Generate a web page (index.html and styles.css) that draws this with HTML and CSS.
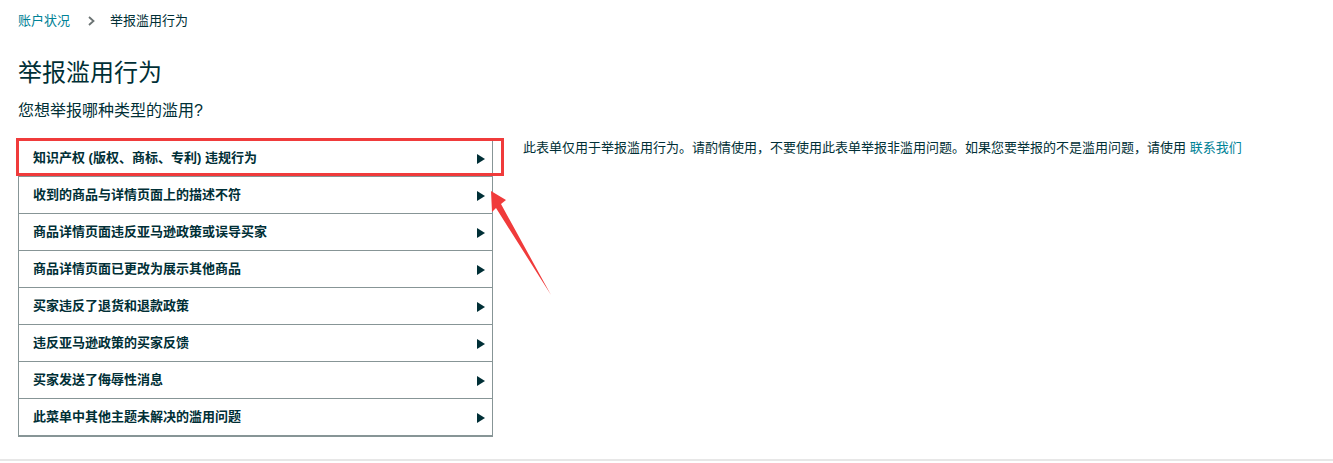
FILE: index.html
```html
<!DOCTYPE html>
<html lang="zh-CN">
<head>
  <meta charset="UTF-8" />
  <meta name="viewport" content="width=device-width, initial-scale=1.0" />
  <title>举报滥用行为</title>
  <link rel="stylesheet" href="styles.css">
</head>
<body>
  <div class="page">
    <div class="breadcrumb">
      <a href="#">账户状况</a>
      <svg class="crumb-sep" width="7" height="10" viewBox="0 0 7 10"><path d="M1 1 L5.5 5 L1 9" fill="none" stroke="#6b7373" stroke-width="1.8"/></svg>
      <span>举报滥用行为</span>
    </div>

    <h1>举报滥用行为</h1>
    <p class="question">您想举报哪种类型的滥用?</p>

    <div class="content">
      <ul class="abuse-list">
        <li class="selected">知识产权 (版权、商标、专利) 违规行为<span class="mark"></span></li>
        <li>收到的商品与详情页面上的描述不符</li>
        <li>商品详情页面违反亚马逊政策或误导买家</li>
        <li>商品详情页面已更改为展示其他商品</li>
        <li>买家违反了退货和退款政策</li>
        <li>违反亚马逊政策的买家反馈</li>
        <li>买家发送了侮辱性消息</li>
        <li>此菜单中其他主题未解决的滥用问题</li>
      </ul>

      <p class="note">此表单仅用于举报滥用行为。请酌情使用，不要使用此表单举报非滥用问题。如果您要举报的不是滥用问题，请使用 <a href="#">联系我们</a></p>
    </div>
  </div>

  <svg class="pointer" width="80" height="120" viewBox="0 0 80 120">
    <polygon points="6,6 21,15 16,19 66,110 11,23 7,27" fill="#f03b3b"/>
  </svg>

  <div class="footer-line"></div>
</body>
</html>
```

FILE: styles.css
```css
body {
  margin: 0;
  font-family: Arial, "Noto Sans CJK SC", sans-serif;
  color: #002f36;
  background-color: #fff;
  position: relative;
  height: 463px;
  overflow: hidden;
}

.page {
  padding: 12px 18px 0;
}

.breadcrumb {
  font-size: 13px;
  line-height: 18px;
  display: flex;
  align-items: center;
}

.breadcrumb a {
  color: #008296;
  text-decoration: none;
}

.crumb-sep {
  margin: 0 15px 0 18px;
}

h1 {
  font-size: 24px;
  font-weight: normal;
  line-height: 30px;
  margin: 28px 0 0;
}

.question {
  font-size: 16px;
  line-height: 20px;
  margin: 13px 0 0;
}

.content {
  display: flex;
  align-items: flex-start;
  margin-top: 18px;
}

.abuse-list {
  list-style: none;
  margin: 0;
  padding: 0;
  width: 473px;
  border: 1px solid #879596;
  border-bottom-width: 2px;
  flex-shrink: 0;
}

.abuse-list li {
  position: relative;
  height: 36px;
  line-height: 36px;
  padding-left: 14px;
  font-size: 13px;
  font-weight: bold;
  border-top: 1px solid #879596;
}

.abuse-list li:first-child {
  border-top: none;
}

.abuse-list li::after {
  content: "";
  position: absolute;
  right: 7px;
  top: 14px;
  border-style: solid;
  border-width: 5px 0 5px 8px;
  border-color: transparent transparent transparent #002f36;
}

.mark {
  position: absolute;
  top: -2px;
  left: -3px;
  right: -12px;
  bottom: 0;
  border: 3px solid #f03b3b;
}

.note {
  font-size: 13px;
  line-height: 18px;
  margin: 0 0 0 30px;
}

.note a {
  color: #008296;
  text-decoration: none;
}

.pointer {
  position: absolute;
  left: 485px;
  top: 185px;
}

.footer-line {
  position: absolute;
  left: 0;
  right: 0;
  top: 459px;
  height: 2px;
  background-color: #e7e7e7;
}
```
